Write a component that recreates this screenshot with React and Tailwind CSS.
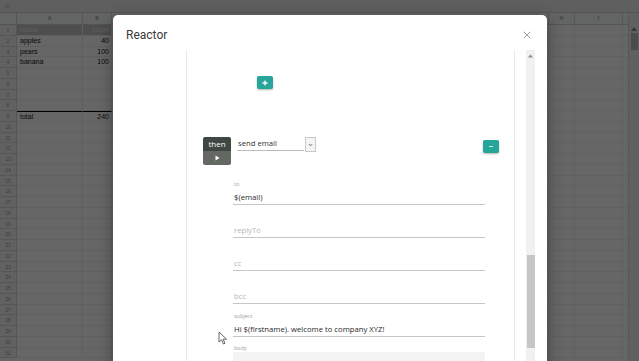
import React from 'react';
import { X } from 'lucide-react';

const rows = Array.from({ length: 31 }, (_, i) => i + 1);
const data = {
  1: ['name', 'count'],
  2: ['apples', '40'],
  3: ['pears', '100'],
  4: ['banana', '100'],
  9: ['total', '240'],
};

function Sheet() {
  return (
    <div className="flex flex-col w-[639px] h-[361px] bg-white font-['Liberation_Sans',sans-serif]">
      <div className="h-[13px] shrink-0 bg-[#eeeeee] border-b border-[#d4d4d4] flex items-center pl-[5px] text-[6px] italic text-[#aaa]">
        fx
      </div>
      <div className="flex flex-1 min-h-0">
        <div className="flex-1 flex flex-col min-w-0">
          <div className="h-[12px] shrink-0 flex bg-[#f8f9fa] border-b border-[#cfcfcf] text-[5.5px] text-[#888] leading-[11px]">
            <div className="w-[17px] border-r border-[#cfcfcf]" />
            <div className="w-[66px] border-r border-[#dadada] text-center">A</div>
            <div className="w-[29px] border-r border-[#dadada] text-center">B</div>
            <div className="w-[437px] border-r border-[#dadada]" />
            <div className="w-[26px] border-r border-[#dadada] text-center">H</div>
            <div className="w-[48px] border-r border-[#dadada] text-center">I</div>
            <div className="flex-1" />
          </div>
          {rows.map((r) => {
            const d = data[r];
            const head = r === 1;
            const total = r === 9;
            return (
              <div key={r} className="h-[10.75px] shrink-0 flex text-[7px] leading-[10px]">
                <div className="w-[17px] bg-[#f3f3f3] border-r border-b border-[#d6d6d6] text-center text-[5px] text-[#999]">
                  {r}
                </div>
                <div
                  className={`w-[66px] border-r border-b border-[#f0f0f0] pl-[3px] text-[#111] ${head ? 'bg-[#c4c4c4] text-[#e6e6e6]' : ''} ${total ? 'border-t border-t-black' : ''}`}
                >
                  {d ? d[0] : ''}
                </div>
                <div
                  className={`w-[29px] border-r border-b border-[#f0f0f0] pr-[2px] text-right text-[#111] ${head ? 'bg-[#c4c4c4] text-[#e6e6e6]' : ''} ${total ? 'border-t border-t-black' : ''}`}
                >
                  {d ? d[1] : ''}
                </div>
                <div className="w-[437px] border-r border-b border-[#f0f0f0]" />
                <div className="w-[26px] border-r border-b border-[#f0f0f0]" />
                <div className="w-[48px] border-r border-b border-[#f0f0f0]" />
                <div className="flex-1 border-b border-[#f0f0f0]" />
              </div>
            );
          })}
        </div>
        <div className="w-[11px] shrink-0 bg-[#f1f1f1] border-l border-[#dcdcdc] flex flex-col items-center pt-[14px]">
          <svg width="6" height="4" viewBox="0 0 6 4">
            <path d="M0 4 L3 0 L6 4 Z" fill="#888" />
          </svg>
          <div className="mt-[2px] w-[7px] h-[17px] bg-[#bdbdbd]" />
        </div>
      </div>
    </div>
  );
}

function Field({ label, value, placeholder }) {
  return (
    <div className="h-[33px] flex flex-col justify-end">
      <div className="h-[8px] text-[5.5px] leading-[8px] text-[#a0a0a0] pl-[1px]">{label || ''}</div>
      <div
        className={`h-[17px] border-b border-[#c6c6c6] text-[7.7px] leading-[10px] pt-[4px] pl-[1px] ${value ? 'text-[#2a2a2a]' : 'text-[#b5b5b5]'}`}
      >
        {value || placeholder}
      </div>
    </div>
  );
}

function TealButton({ children, className = '' }) {
  return (
    <div
      className={`w-[16px] h-[13px] bg-[#26a69a] rounded-[2px] flex items-center justify-center shadow-[0_1px_2px_rgba(0,0,0,0.3)] ${className}`}
    >
      {children}
    </div>
  );
}

function Modal() {
  return (
    <div className="absolute left-[113px] top-[15px] w-[434px] h-[360px] bg-white rounded-t-[5px] shadow-[0_4px_16px_rgba(0,0,0,0.35)] flex flex-col overflow-hidden">
      <div className="h-[35px] shrink-0 flex items-start justify-between pl-[13px] pr-[14px] pt-[13px]">
        <span className="text-[12px] leading-[14px] text-[#3a3a3a] font-['Roboto',sans-serif]">Reactor</span>
        <X size={12} strokeWidth={1.4} className="text-[#777] mt-[1px]" />
      </div>
      <div className="flex flex-1 min-h-0">
        <div className="w-[73px] shrink-0" />
        <div className="w-[329px] shrink-0 border-x border-[#e8e8e8] flex flex-col font-['Open_Sans',sans-serif]">
          <div className="pl-[70px] pt-[26px]">
            <TealButton>
              <svg width="6" height="6" viewBox="0 0 6 6">
                <path d="M3 0.5 V5.5 M0.5 3 H5.5" stroke="white" strokeWidth="1.3" />
              </svg>
            </TealButton>
          </div>
          <div className="flex items-start pl-[16px] pr-[15px] mt-[48px]">
            <div className="w-[28px] flex flex-col rounded-[2px] overflow-hidden">
              <div className="h-[14px] bg-[#3e4741] text-white text-[8px] leading-[14px] text-center">then</div>
              <div className="h-[14px] bg-[#636863] flex items-center justify-center">
                <svg width="5" height="6" viewBox="0 0 5 6">
                  <path d="M0.5 0.5 L4.5 3 L0.5 5.5 Z" fill="white" />
                </svg>
              </div>
            </div>
            <div className="ml-[6px] w-[67px] h-[14px] border-b border-[#bdbdbd] text-[7.7px] leading-[13px] text-[#333] pl-[1px]">
              send email
            </div>
            <div className="ml-[1px] w-[11px] h-[15px] border border-[#c8c8c8] bg-[#f4f4f4] flex items-center justify-center">
              <svg width="5" height="4" viewBox="0 0 5 4">
                <path d="M0.8 1 L2.5 2.8 L4.2 1" stroke="#666" strokeWidth="0.9" fill="none" />
              </svg>
            </div>
            <div className="flex-1" />
            <TealButton className="mt-[3px]">
              <div className="w-[4px] h-[1.5px] bg-white/80" />
            </TealButton>
          </div>
          <div className="flex flex-col pl-[46px] pr-[29px] mt-[7px]">
            <Field label="to" value="$(email)" />
            <Field placeholder="replyTo" />
            <Field placeholder="cc" />
            <Field placeholder="bcc" />
            <Field label="subject" value="Hi $(firstname). welcome to company XYZ!" />
            <div className="mt-[7px] h-[8px] text-[5.5px] leading-[8px] text-[#a0a0a0] pl-[1px]">body</div>
            <div className="h-[40px] bg-[#f3f3f3]" />
          </div>
        </div>
        <div className="w-[11px] shrink-0" />
        <div className="w-[9px] shrink-0 bg-[#f1f1f1] flex flex-col items-center pt-[4px]">
          <svg width="5" height="4" viewBox="0 0 5 4">
            <path d="M0 3.5 L2.5 0.5 L5 3.5 Z" fill="#8a8a8a" />
          </svg>
          <div className="mt-[197px] w-[8px] h-[93px] bg-[#c6c6c6]" />
        </div>
      </div>
    </div>
  );
}

export default function App() {
  return (
    <div className="relative w-[639px] h-[361px] overflow-hidden">
      <Sheet />
      <div className="absolute inset-0 bg-black/60" />
      <Modal />
      <svg className="absolute left-[218px] top-[331px]" width="10" height="14" viewBox="0 0 10 14">
        <path d="M1 1 L1 11 L3.5 8.8 L5.5 13 L7 12.3 L5.1 8.2 L8.5 8.2 Z" fill="white" stroke="#555" strokeWidth="0.9" strokeLinejoin="round" />
      </svg>
    </div>
  );
}
